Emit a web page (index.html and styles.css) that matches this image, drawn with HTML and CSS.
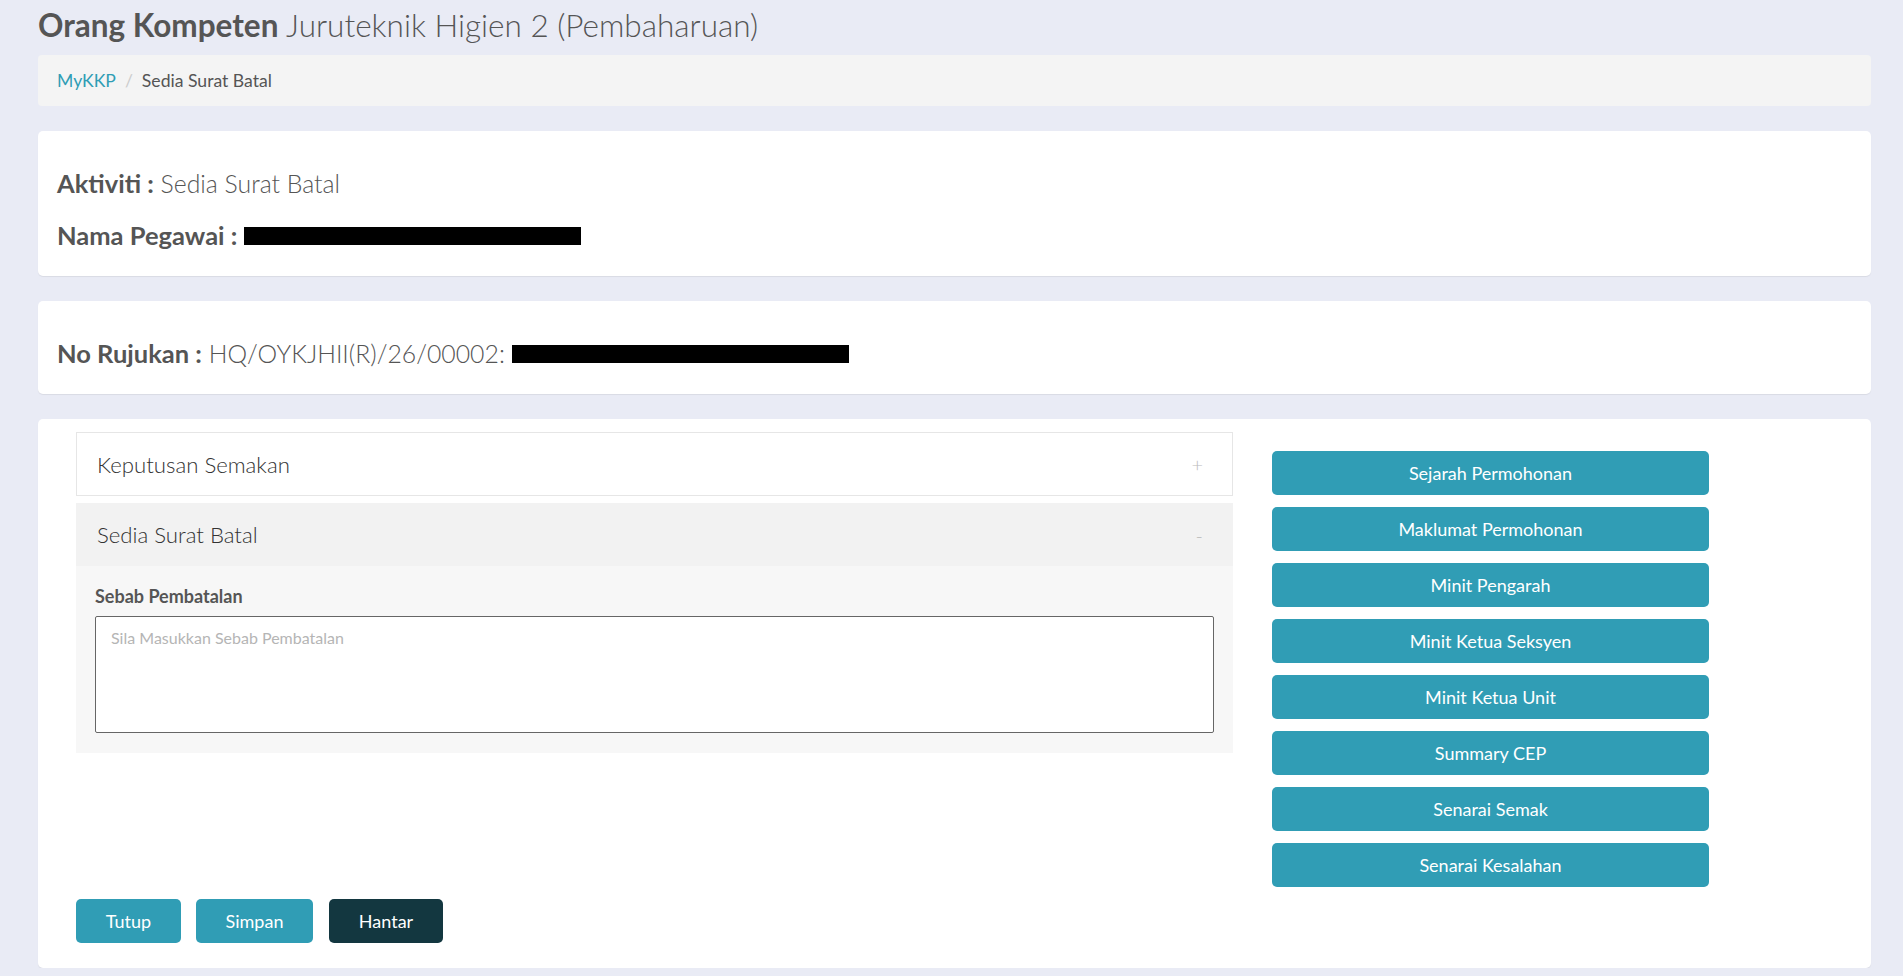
FILE: index.html
```html
<!DOCTYPE html>
<html lang="ms">
<head>
    <meta charset="UTF-8">
    <meta name="viewport" content="width=device-width, initial-scale=1.0">
    <title>Sedia Surat Batal</title>
    <link rel="stylesheet" href="styles.css">
</head>
<body>
    <div class="page">
        <h2 class="page-title"><strong>Orang Kompeten</strong> Juruteknik Higien 2 (Pembaharuan)</h2>

        <div class="breadcrumb">
            <a href="#">MyKKP</a>
            <span class="divider">/</span>
            <span class="current">Sedia Surat Batal</span>
        </div>

        <div class="card info-card">
            <div class="info-line"><b>Aktiviti :</b> Sedia Surat Batal</div>
            <div class="info-line"><b>Nama Pegawai :</b> <span class="masked"></span></div>
        </div>

        <div class="card info-card">
            <div class="info-line"><b>No Rujukan :</b> HQ/OYKJHII(R)/26/00002: <span class="masked"></span></div>
        </div>

        <div class="card form-card">
            <div class="form-row">
                <div class="accordion">
                    <div class="acc-item">
                        <div class="acc-head">
                            <span>Keputusan Semakan</span>
                            <span class="acc-sign">+</span>
                        </div>
                    </div>
                    <div class="acc-item open">
                        <div class="acc-head">
                            <span>Sedia Surat Batal</span>
                            <span class="acc-sign">-</span>
                        </div>
                        <div class="acc-body">
                            <label for="sebab">Sebab Pembatalan</label>
                            <textarea id="sebab" placeholder="Sila Masukkan Sebab Pembatalan"></textarea>
                        </div>
                    </div>
                </div>

                <div class="side-buttons">
                    <button class="btn btn-info">Sejarah Permohonan</button>
                    <button class="btn btn-info">Maklumat Permohonan</button>
                    <button class="btn btn-info">Minit Pengarah</button>
                    <button class="btn btn-info">Minit Ketua Seksyen</button>
                    <button class="btn btn-info">Minit Ketua Unit</button>
                    <button class="btn btn-info">Summary CEP</button>
                    <button class="btn btn-info">Senarai Semak</button>
                    <button class="btn btn-info">Senarai Kesalahan</button>
                </div>
            </div>

            <div class="actions">
                <button class="btn btn-info btn-tutup">Tutup</button>
                <button class="btn btn-info btn-simpan">Simpan</button>
                <button class="btn btn-dark btn-hantar">Hantar</button>
            </div>
        </div>
    </div>
</body>
</html>
```

FILE: styles.css
```css
body {
    margin: 0;
    background-color: #e9ebf5;
    font-family: Lato, "Open Sans", sans-serif;
    color: #555;
}
.page {
    padding: 5px 32px 0 38px;
}
.page-title {
    margin: 0 0 10px;
    font-size: 31.5px;
    line-height: 40px;
    font-weight: 300;
    color: #555;
}
.page-title strong {
    font-weight: 700;
}

/* breadcrumb bar */
.breadcrumb {
    display: flex;
    align-items: center;
    height: 51px;
    padding: 0 19px;
    margin-bottom: 25px;
    background-color: #f4f4f4;
    border-radius: 4px;
    font-size: 17.6px;
    line-height: 20px;
}
.breadcrumb a {
    color: #2f9db5;
    text-decoration: none;
}
.breadcrumb .divider {
    color: #ccc;
    margin: 0 9px;
}
.breadcrumb .current {
    color: #555;
}

.card {
    background-color: #fff;
    border-radius: 5px;
    box-shadow: 0 1px 1px rgba(0,0,0,0.07);
    margin-bottom: 25px;
}
.info-card {
    padding: 40px 19px 27px;
}
.info-line {
    font-size: 24.8px;
    line-height: 26px;
    font-weight: 300;
    color: #555;
}
.info-line + .info-line {
    margin-top: 26px;
}
.info-line b {
    font-size: 25.5px;
    line-height: 20px;
    font-weight: 700;
}
.masked {
    display: inline-block;
    width: 337px;
    height: 18px;
    background-color: #000;
}

/* form card */
.form-card {
    padding: 13px 37px 25px 38px;
    margin-bottom: 0;
}
.form-row {
    display: flex;
    align-items: flex-start;
    gap: 39px;
}
.accordion {
    flex: 0 0 1157px;
}
.acc-item + .acc-item {
    margin-top: 7px;
}
.acc-head {
    display: flex;
    justify-content: space-between;
    align-items: center;
    height: 62px;
    padding: 0 29px 0 20px;
    border: 1px solid #e6e6e6;
    font-size: 22.2px;
    font-weight: 300;
    color: #333;
}
.acc-item.open .acc-head {
    background-color: #f2f2f2;
    border-color: #f2f2f2;
    height: 61px;
}
.acc-sign {
    font-size: 20px;
    color: #bbb;
}
.acc-body {
    background-color: #f7f7f7;
    padding: 20px 19px 20px;
}
.acc-body label {
    display: block;
    font-size: 18px;
    line-height: 20px;
    font-weight: 700;
    color: #555;
    margin-bottom: 10px;
}
.acc-body textarea {
    display: block;
    box-sizing: border-box;
    width: 100%;
    height: 117px;
    padding: 11px 15px;
    border: 1px solid #666;
    border-radius: 2px;
    background-color: #fff;
    font-family: Lato, "Open Sans", sans-serif;
    font-size: 16px;
    line-height: 20px;
    resize: none;
}
.acc-body textarea::placeholder {
    color: #b5b5b5;
}

/* buttons */
.btn {
    height: 44px;
    border: none;
    border-radius: 5px;
    font-family: Lato, "Open Sans", sans-serif;
    font-size: 18px;
    color: #fff;
    cursor: pointer;
}
.btn-info {
    background-color: #309db5;
}
.btn-dark {
    background-color: #133740;
}
.side-buttons {
    flex: 0 0 437px;
    display: flex;
    flex-direction: column;
    gap: 12px;
    margin-top: 19px;
}
.actions {
    display: flex;
    gap: 15px;
    margin-top: 12px;
}
.btn-tutup {
    width: 105px;
}
.btn-simpan {
    width: 117px;
}
.btn-hantar {
    width: 114px;
    margin-left: 1px;
}
```
